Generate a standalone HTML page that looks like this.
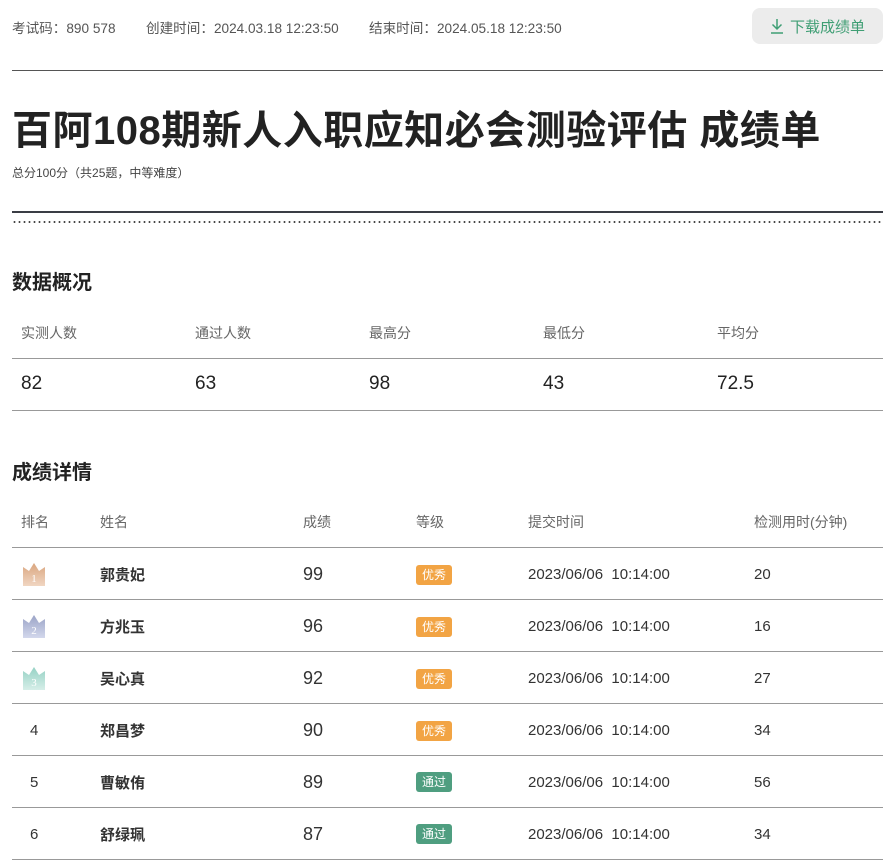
<!DOCTYPE html>
<html><head><meta charset="utf-8"><style>
*{margin:0;padding:0;box-sizing:border-box}
body{width:894px;height:866px;background:#fff;position:relative;overflow:hidden;font-family:"Liberation Sans","Noto Sans CJK SC",sans-serif;color:#222}
.a{position:absolute;white-space:nowrap}
.meta{font-size:13.6px;color:#555;top:17px}
.btn{left:752px;top:8px;width:131px;height:36px;background:#ececec;border-radius:8px;color:#3f9e74;font-size:15px;display:flex;align-items:center;justify-content:center;gap:6px}
.line{position:absolute;left:12px;width:871px}
.h2{font-size:20px;font-weight:bold;color:#222}
.th{font-size:14px;color:#666}
.sv{font-size:19px;font-weight:500;color:#222}
.badge{position:absolute;left:416px;width:36px;height:20px;border-radius:3px;color:#fff;font-size:12px;text-align:center;line-height:20px}
.o{background:#f2a444}.g{background:#4f9e80}
.td{font-size:15px;color:#333}
.nm{font-size:15px;font-weight:bold;color:#333}
.sc{font-size:18px;font-weight:500;color:#333}
</style></head><body>
<div class="a meta" style="left:12px">考试码：890 578</div>
<div class="a meta" style="left:146px">创建时间：2024.03.18 12:23:50</div>
<div class="a meta" style="left:369px">结束时间：2024.05.18 12:23:50</div>
<div class="a btn"><svg width="14" height="16" viewBox="0 0 14 16"><path d="M7 1v10M2.5 6.5L7 11l4.5-4.5M1 15h12" stroke="#3f9e74" stroke-width="1.5" fill="none"/></svg>下载成绩单</div>
<div class="line" style="top:70px;height:1px;background:#555"></div>
<div class="a" style="left:12px;top:98px;font-size:40px;font-weight:bold;color:#222;letter-spacing:0.5px">百阿108期新人入职应知必会测验评估 成绩单</div>
<div class="a" style="left:12px;top:164px;font-size:12px;color:#444">总分100分（共25题，中等难度）</div>
<div class="line" style="top:211px;height:2px;background:#3a3d45"></div>
<div class="line" style="top:221px;height:2px;background-image:radial-gradient(circle,#444 0.9px,transparent 1.1px);background-size:5px 2px"></div>
<div class="a h2" style="left:12px;top:266px">数据概况</div>
<div class="a th" style="left:21px;top:323px">实测人数</div>
<div class="a th" style="left:195px;top:323px">通过人数</div>
<div class="a th" style="left:369px;top:323px">最高分</div>
<div class="a th" style="left:543px;top:323px">最低分</div>
<div class="a th" style="left:717px;top:323px">平均分</div>
<div class="line" style="top:358px;height:1px;background:#999"></div>
<div class="a sv" style="left:21px;top:373px">82</div>
<div class="a sv" style="left:195px;top:373px">63</div>
<div class="a sv" style="left:369px;top:373px">98</div>
<div class="a sv" style="left:543px;top:373px">43</div>
<div class="a sv" style="left:717px;top:373px">72.5</div>
<div class="line" style="top:410px;height:1px;background:#999"></div>
<div class="a h2" style="left:12px;top:456px">成绩详情</div>
<div class="a th" style="left:21px;top:512px">排名</div>
<div class="a th" style="left:100px;top:512px">姓名</div>
<div class="a th" style="left:303px;top:512px">成绩</div>
<div class="a th" style="left:416px;top:512px">等级</div>
<div class="a th" style="left:528px;top:512px">提交时间</div>
<div class="a th" style="left:754px;top:512px">检测用时(分钟)</div>
<div class="line" style="top:547px;height:1px;background:#999"></div>

<svg class="a" style="left:22px;top:562px" width="24" height="25" viewBox="0 0 24 25"><defs><linearGradient id="c1" x1="0" y1="0" x2="0" y2="1"><stop offset="0" stop-color="#d9a57e"/><stop offset="1" stop-color="#f0d6c2"/></linearGradient></defs><path d="M1 5l6 4 5-8 5 8 6-4v19H1z" fill="url(#c1)"/><text x="12" y="20" font-size="11" fill="#fff" text-anchor="middle" font-family="Liberation Serif">1</text></svg>
<svg class="a" style="left:22px;top:614px" width="24" height="25" viewBox="0 0 24 25"><defs><linearGradient id="c2" x1="0" y1="0" x2="0" y2="1"><stop offset="0" stop-color="#9aa3c6"/><stop offset="1" stop-color="#d3d8ec"/></linearGradient></defs><path d="M1 5l6 4 5-8 5 8 6-4v19H1z" fill="url(#c2)"/><text x="12" y="20" font-size="11" fill="#fff" text-anchor="middle" font-family="Liberation Serif">2</text></svg>
<svg class="a" style="left:22px;top:666px" width="24" height="25" viewBox="0 0 24 25"><defs><linearGradient id="c3" x1="0" y1="0" x2="0" y2="1"><stop offset="0" stop-color="#95d1c4"/><stop offset="1" stop-color="#d6eee8"/></linearGradient></defs><path d="M1 5l6 4 5-8 5 8 6-4v19H1z" fill="url(#c3)"/><text x="12" y="20" font-size="11" fill="#fff" text-anchor="middle" font-family="Liberation Serif">3</text></svg>
<div class="a td" style="left:30px;top:722px">4</div>
<div class="a td" style="left:30px;top:774px">5</div>
<div class="a td" style="left:30px;top:826px">6</div>

<div class="a nm" style="left:100px;top:564px">郭贵妃</div>
<div class="a nm" style="left:100px;top:616px">方兆玉</div>
<div class="a nm" style="left:100px;top:668px">吴心真</div>
<div class="a nm" style="left:100px;top:720px">郑昌梦</div>
<div class="a nm" style="left:100px;top:772px">曹敏侑</div>
<div class="a nm" style="left:100px;top:824px">舒绿珮</div>

<div class="a sc" style="left:303px;top:564px">99</div>
<div class="a sc" style="left:303px;top:616px">96</div>
<div class="a sc" style="left:303px;top:668px">92</div>
<div class="a sc" style="left:303px;top:720px">90</div>
<div class="a sc" style="left:303px;top:772px">89</div>
<div class="a sc" style="left:303px;top:824px">87</div>

<div class="badge o" style="top:565px">优秀</div>
<div class="badge o" style="top:617px">优秀</div>
<div class="badge o" style="top:669px">优秀</div>
<div class="badge o" style="top:721px">优秀</div>
<div class="badge g" style="top:772px">通过</div>
<div class="badge g" style="top:824px">通过</div>

<div class="a td" style="left:528px;top:566px">2023/06/06&nbsp;&nbsp;10:14:00</div>
<div class="a td" style="left:528px;top:618px">2023/06/06&nbsp;&nbsp;10:14:00</div>
<div class="a td" style="left:528px;top:670px">2023/06/06&nbsp;&nbsp;10:14:00</div>
<div class="a td" style="left:528px;top:722px">2023/06/06&nbsp;&nbsp;10:14:00</div>
<div class="a td" style="left:528px;top:774px">2023/06/06&nbsp;&nbsp;10:14:00</div>
<div class="a td" style="left:528px;top:826px">2023/06/06&nbsp;&nbsp;10:14:00</div>

<div class="a td" style="left:754px;top:566px">20</div>
<div class="a td" style="left:754px;top:618px">16</div>
<div class="a td" style="left:754px;top:670px">27</div>
<div class="a td" style="left:754px;top:722px">34</div>
<div class="a td" style="left:754px;top:774px">56</div>
<div class="a td" style="left:754px;top:826px">34</div>

<div class="line" style="top:599px;height:1px;background:#999"></div>
<div class="line" style="top:651px;height:1px;background:#999"></div>
<div class="line" style="top:703px;height:1px;background:#999"></div>
<div class="line" style="top:755px;height:1px;background:#999"></div>
<div class="line" style="top:807px;height:1px;background:#999"></div>
<div class="line" style="top:859px;height:1px;background:#999"></div>
</body></html>
